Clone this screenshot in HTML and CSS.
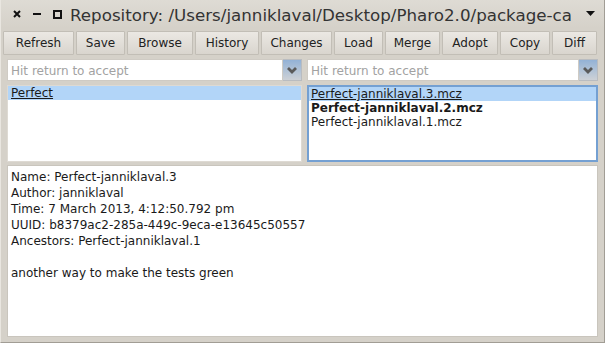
FILE: index.html
```html
<!DOCTYPE html>
<html lang="en">
<head>
  <meta charset="UTF-8">
  <title>Repository</title>
  <link rel="stylesheet" href="styles.css">
</head>
<body>
  <div class="window">
    <div class="titlebar">
      <div class="win-icons">
        <svg width="8" height="8" viewBox="0 0 8 8"><path d="M1 1 L7 7 M7 1 L1 7" stroke="#111" stroke-width="2"/></svg>
        <svg width="8" height="8" viewBox="0 0 8 8"><path d="M0 4 H8" stroke="#111" stroke-width="2"/></svg>
        <svg width="9" height="9" viewBox="0 0 9 9"><rect x="1" y="1" width="7" height="7" fill="none" stroke="#111" stroke-width="2"/></svg>
      </div>
      <div class="title">Repository: /Users/janniklaval/Desktop/Pharo2.0/package-cache</div>
      <svg class="menu-arrow" width="9" height="6" viewBox="0 0 9 6"><path d="M0 0 H9 L4.5 5 Z" fill="#111"/></svg>
    </div>

    <div class="toolbar">
      <button class="refresh">Refresh</button>
      <button class="save">Save</button>
      <button class="browse">Browse</button>
      <button class="history">History</button>
      <button class="changes">Changes</button>
      <button class="load">Load</button>
      <button class="merge">Merge</button>
      <button class="adopt">Adopt</button>
      <button class="copy">Copy</button>
      <button class="diff">Diff</button>
    </div>

    <div class="panes">
      <div class="combo">
        <div class="combo-field">Hit return to accept</div>
        <div class="combo-arrow">
          <svg width="10" height="7" viewBox="0 0 10 7"><path d="M1 1 L5 5 L9 1" fill="none" stroke="#5a5a5a" stroke-width="2.8"/></svg>
        </div>
      </div>
      <div class="combo">
        <div class="combo-field">Hit return to accept</div>
        <div class="combo-arrow">
          <svg width="10" height="7" viewBox="0 0 10 7"><path d="M1 1 L5 5 L9 1" fill="none" stroke="#5a5a5a" stroke-width="2.8"/></svg>
        </div>
      </div>

      <ul class="list">
        <li class="selected">Perfect</li>
      </ul>
      <ul class="list focused">
        <li class="selected">Perfect-janniklaval.3.mcz</li>
        <li class="bold">Perfect-janniklaval.2.mcz</li>
        <li>Perfect-janniklaval.1.mcz</li>
      </ul>
    </div>

    <div class="info">
      <div>Name: Perfect-janniklaval.3</div>
      <div>Author: janniklaval</div>
      <div>Time: 7 March 2013, 4:12:50.792 pm</div>
      <div>UUID: b8379ac2-285a-449c-9eca-e13645c50557</div>
      <div>Ancestors: Perfect-janniklaval.1</div>
      <div>&nbsp;</div>
      <div>another way to make the tests green</div>
    </div>
  </div>
</body>
</html>
```

FILE: styles.css
```css
body {
  margin: 0;
  font-family: "DejaVu Sans", sans-serif;
  font-size: 12px;
  color: #1a1a1a;
}

.window {
  width: 605px;
  height: 343px;
  box-sizing: border-box;
  background: #d5d1c9;
  border-left: 1px solid #e9e6e0;
  border-right: 1px solid #a19d95;
  border-bottom: 1px solid #a19d95;
  display: flex;
  flex-direction: column;
  overflow: hidden;
}

.titlebar {
  height: 28px;
  display: flex;
  align-items: center;
  background: linear-gradient(#dedbd4, #d5d1c9);
  box-sizing: border-box;
}

.win-icons {
  display: flex;
  align-items: center;
  gap: 12px;
  padding-left: 12px;
  width: 57px;
}

.title {
  font-size: 16.7px;
  color: #333;
  white-space: nowrap;
  overflow: hidden;
  width: 501px;
  margin-right: 5px;
  padding-top: 1px;
}

.menu-arrow {
  margin-left: 10px;
}

.toolbar {
  display: flex;
  gap: 2px;
  padding: 3px 0 0 2px;
  height: 24px;
}

.toolbar button {
  flex: none;
  font-family: "DejaVu Sans", sans-serif;
  font-size: 12px;
  color: #222;
  padding: 0;
  border: 1px solid #c2beb6;
  border-radius: 1px;
  background: linear-gradient(#ebe8e3, #d9d5ce);
}

.refresh { width: 71px; }
.save { width: 49px; }
.browse { width: 66px; }
.history { width: 64px; }
.changes { width: 71px; }
.load { width: 49px; }
.merge { width: 55px; }
.adopt { width: 56px; }
.copy { width: 50px; }
.diff { width: 45px; }

.panes {
  display: grid;
  grid-template-columns: 295px 291px;
  grid-template-rows: 22px 77px;
  column-gap: 5px;
  row-gap: 4px;
  padding: 4px 0 0 6px;
}

.combo {
  display: flex;
}

.combo-field {
  flex: 1;
  background: #fff;
  border: 1px solid #cfcbc4;
  color: #a2a2a2;
  padding: 3px 3px 0;
  line-height: 16px;
}

.combo-arrow {
  width: 18px;
  display: flex;
  align-items: center;
  justify-content: center;
  background: linear-gradient(#93b2d6, #cdd1d6);
  border: 1px solid #b9bcc0;
  border-left: none;
}

.list {
  list-style: none;
  margin: 0;
  padding: 0;
  background: #fff;
  border: 1px solid #dedad3;
  line-height: 14px;
}

.list li {
  padding-left: 3px;
}

.list.focused {
  border: 2px solid #74a0d2;
}

.list.focused li {
  padding-left: 2px;
}

.selected {
  background: #b2d5f8;
  text-decoration: underline;
}

.bold {
  font-weight: bold;
}

.info {
  margin: 3px 6px 0 6px;
  height: 172px;
  box-sizing: border-box;
  background: #fff;
  border: 1px solid #c9c5bd;
  padding: 3px 3px;
  line-height: 16px;
}
```
